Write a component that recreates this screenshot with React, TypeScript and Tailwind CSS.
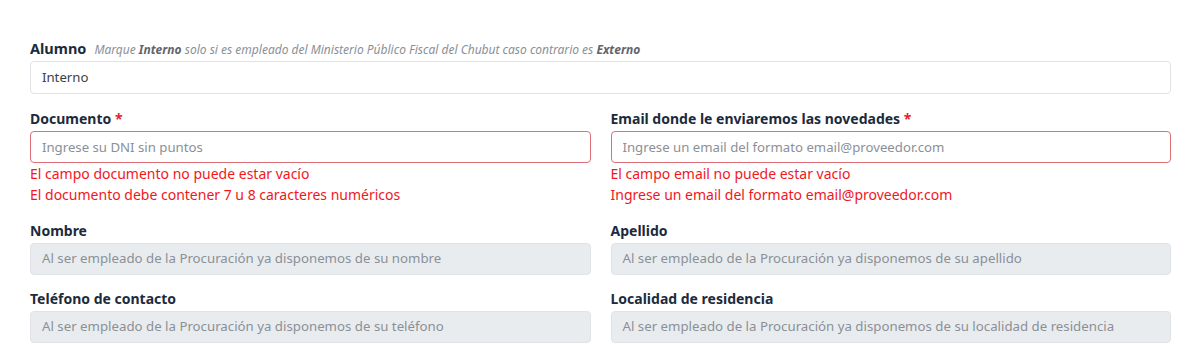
import React from 'react'

const font = { fontFamily: '"Noto Sans", "Open Sans", sans-serif' }

function Label({ text, required }: { text: string; required?: boolean }) {
  return (
    <label className="block text-[14px] leading-[21px] font-bold text-[#1c2b3c] mb-[2px]">
      {text}
      {required && <span className="text-[#e3262b]"> *</span>}
    </label>
  )
}

function Disabled({ text }: { text: string }) {
  return (
    <div className="h-[32px] rounded-[4px] border border-[#dfe3e7] bg-[#e9ecef] px-[11px] flex items-center text-[13.25px] text-[#8a9097]">
      {text}
    </div>
  )
}

function ErrorInput({ placeholder }: { placeholder: string }) {
  return (
    <input
      className="w-full h-[32px] rounded-[4px] border border-[#e07078] bg-white px-[11px] text-[13.2px] text-[#495057] placeholder:text-[#8a9097] outline-none"
      placeholder={placeholder}
    />
  )
}

function Errors({ lines }: { lines: string[] }) {
  return (
    <div className="text-[14px] leading-[21px] text-[#f2161d]">
      {lines.map(l => (
        <div key={l}>{l}</div>
      ))}
    </div>
  )
}

export default function App() {
  return (
    <div className="min-h-screen bg-white pl-[30px] pr-[29px] pt-[38px]" style={font}>
      {/* Alumno */}
      <div className="flex items-baseline gap-[8px] h-[23px] leading-[21px]">
        <span className="text-[14.5px] font-bold text-[#1c2b3c]">Alumno</span>
        <span className="text-[12px] italic text-[#8a9097]">
          Marque <b className="text-[#5f656b]">Interno</b> solo si es empleado del Ministerio Público Fiscal del Chubut caso contrario es{' '}
          <b className="text-[#5f656b]">Externo</b>
        </span>
      </div>
      <div className="h-[33px] rounded-[4px] border border-[#dfe3e7] bg-white px-[11px] flex items-center text-[13.2px] text-[#3a3f44]">
        Interno
      </div>

      <div className="grid grid-cols-2 gap-x-[20px] mt-[14px]">
        <div>
          <Label text="Documento" required />
          <ErrorInput placeholder="Ingrese su DNI sin puntos" />
          <Errors lines={['El campo documento no puede estar vacío', 'El documento debe contener 7 u 8 caracteres numéricos']} />
        </div>
        <div>
          <Label text="Email donde le enviaremos las novedades" required />
          <ErrorInput placeholder="Ingrese un email del formato email@proveedor.com" />
          <Errors lines={['El campo email no puede estar vacío', 'Ingrese un email del formato email@proveedor.com']} />
        </div>

        <div className="mt-[15px]">
          <Label text="Nombre" />
          <Disabled text="Al ser empleado de la Procuración ya disponemos de su nombre" />
        </div>
        <div className="mt-[15px]">
          <Label text="Apellido" />
          <Disabled text="Al ser empleado de la Procuración ya disponemos de su apellido" />
        </div>

        <div className="mt-[13px]">
          <Label text="Teléfono de contacto" />
          <Disabled text="Al ser empleado de la Procuración ya disponemos de su teléfono" />
        </div>
        <div className="mt-[13px]">
          <Label text="Localidad de residencia" />
          <Disabled text="Al ser empleado de la Procuración ya disponemos de su localidad de residencia" />
        </div>
      </div>
    </div>
  )
}
